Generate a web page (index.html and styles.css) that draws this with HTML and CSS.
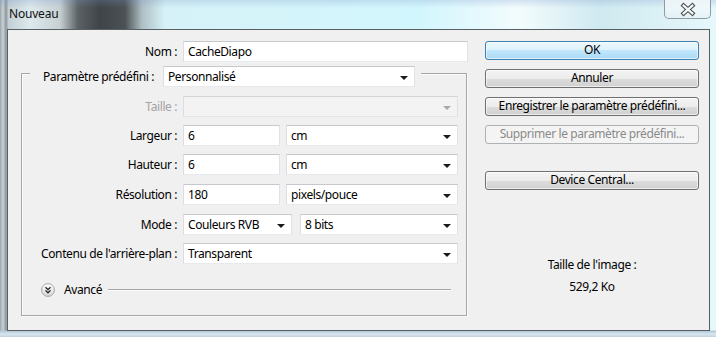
FILE: index.html
```html
<!DOCTYPE html>
<html lang="fr">
<head>
<meta charset="utf-8">
<title>Nouveau</title>
<link rel="stylesheet" href="styles.css">
</head>
<body>
<div class="window">
  <div class="titlebar">
    <span class="title">Nouveau</span>
    <div class="close">
      <svg width="47" height="19" viewBox="0 0 47 19">
        <path d="M20 5.5 L29 13.5 M29 5.5 L20 13.5" stroke="#4b4f52" stroke-width="4.4" stroke-linecap="square" fill="none"/>
        <path d="M20 5.5 L29 13.5 M29 5.5 L20 13.5" stroke="#f4f6f7" stroke-width="2.2" stroke-linecap="square" fill="none"/>
      </svg>
    </div>
  </div>
  <div class="client">
    <div class="form">
      <div class="row">
        <span class="lbl lbl-name">Nom :</span>
        <div class="field w-name">CacheDiapo</div>
      </div>
      <div class="group">
        <div class="legend">
          <span class="legend-lbl">Paramètre prédéfini :</span>
          <div class="field select w-preset">Personnalisé<span class="arrow"></span></div>
        </div>
        <div class="row mt9">
          <span class="lbl disabled">Taille :</span>
          <div class="field select off w-full"><span class="arrow"></span></div>
        </div>
        <div class="row mt8">
          <span class="lbl">Largeur :</span>
          <div class="field w-num">6</div>
          <div class="field select w-unit">cm<span class="arrow"></span></div>
        </div>
        <div class="row mt8">
          <span class="lbl">Hauteur :</span>
          <div class="field w-num">6</div>
          <div class="field select w-unit">cm<span class="arrow"></span></div>
        </div>
        <div class="row mt9">
          <span class="lbl">Résolution :</span>
          <div class="field w-num">180</div>
          <div class="field select w-unit">pixels/pouce<span class="arrow"></span></div>
        </div>
        <div class="row mt9">
          <span class="lbl">Mode :</span>
          <div class="field select w-mode">Couleurs RVB<span class="arrow"></span></div>
          <div class="field select w-bits">8 bits<span class="arrow"></span></div>
        </div>
        <div class="row mt8">
          <span class="lbl">Contenu de l'arrière-plan :</span>
          <div class="field select w-full">Transparent<span class="arrow"></span></div>
        </div>
        <div class="advanced">
          <svg class="adv-icon" width="14" height="14" viewBox="0 0 14 14">
            <defs>
              <linearGradient id="g" x1="0" y1="0" x2="0" y2="1">
                <stop offset="0" stop-color="#ffffff"/>
                <stop offset="1" stop-color="#d6d6d6"/>
              </linearGradient>
            </defs>
            <circle cx="7" cy="7" r="6.4" fill="url(#g)" stroke="#a3a3a3" stroke-width="1"/>
            <path d="M4.5 4.2 L7 6.6 L9.5 4.2 M4.5 7.4 L7 9.8 L9.5 7.4" stroke="#222" stroke-width="1.3" fill="none"/>
          </svg>
          <span class="adv-text">Avancé</span>
          <span class="adv-line"></span>
        </div>
      </div>
    </div>
    <div class="side">
      <div class="btn default">OK</div>
      <div class="btn">Annuler</div>
      <div class="btn">Enregistrer le paramètre prédéfini...</div>
      <div class="btn disabled-btn">Supprimer le paramètre prédéfini...</div>
      <div class="btn mt-device">Device Central...</div>
      <div class="info info-title">Taille de l'image :</div>
      <div class="info info-value">529,2 Ko</div>
    </div>
  </div>
</div>
</body>
</html>
```

FILE: styles.css
```css
* { box-sizing: border-box; }

html, body {
  margin: 0;
  padding: 0;
}

body {
  width: 716px;
  height: 337px;
  overflow: hidden;
  font-family: "Noto Sans", "DejaVu Sans", sans-serif;
  font-size: 12px;
  letter-spacing: -0.4px;
  color: #000;
  background:
    linear-gradient(to right, #9aa5ab 0, #c9d3d7 3px, #8d979c 6px, #b7c3c8 8px, transparent 8px),
    linear-gradient(to right, #b8c6cc 0, #dde9ec 30px, #c7d0d3 60px, #5b6165 78px, #3e4447 100px, #4b5154 125px, #aebfc4 142px, #d6f2f8 165px, #d2f6fd 420px, #f3fcfd 520px, #cfe9f0 600px, #e6f8fb 716px);
}

.window {
  width: 716px;
  height: 337px;
  display: flex;
  flex-direction: column;
  background: linear-gradient(to bottom, transparent 330px, #b3c7d8 331px, #d9e6ef 334px, #c2d2de 337px);
}

.titlebar {
  height: 29px;
  flex: none;
  display: flex;
  align-items: flex-start;
  padding-left: 9px;
  background: linear-gradient(to bottom, rgba(120, 150, 200, 0.25) 0, rgba(255, 255, 255, 0) 8px);
}

.title {
  margin-top: 6px;
  font-size: 12px;
  letter-spacing: -0.2px;
  line-height: 16px;
  color: #111;
}

.close {
  margin-left: auto;
  margin-right: 5px;
  width: 47px;
  height: 19px;
  border: 1px solid #8f9aa2;
  border-top: none;
  border-radius: 0 0 5px 5px;
  background: linear-gradient(to bottom, rgba(255, 255, 255, 0.7), rgba(230, 240, 244, 0.5));
  display: flex;
}

.close svg { display: block; margin-left: -1px; }

.client {
  flex: 1;
  margin: 0 6px 6px 7px;
  border: 1px solid #596065;
  background: #f0f0f0;
  display: flex;
}

.form {
  width: 462px;
  flex: none;
  padding-top: 11px;
  padding-left: 13px;
}

.row {
  display: flex;
  align-items: center;
  height: 21px;
}

.mt8 { margin-top: 8px; }
.mt9 { margin-top: 9px; }

.lbl {
  width: 161px;
  flex: none;
  padding-right: 6px;
  text-align: right;
  white-space: nowrap;
  line-height: 16px;
}

.lbl-name { width: 162px; }

.lbl.disabled { color: #a3a3a3; }

.field {
  height: 21px;
  flex: none;
  display: flex;
  align-items: center;
  padding-left: 4px;
  background: #fff;
  border: 1px solid;
  border-color: #c5c8cc #e0e2e6 #e6e9ee #dcdee3;
  white-space: nowrap;
  line-height: 16px;
}

.select { padding-right: 0; }

.select.off {
  background: #f3f3f3;
  border-color: #d2d4d6 #dfe0e2 #e3e4e6 #dcdddf;
}

.arrow {
  margin-left: auto;
  margin-right: 6px;
  margin-top: 2px;
  width: 0;
  height: 0;
  border-left: 4px solid transparent;
  border-right: 4px solid transparent;
  border-top: 4px solid #1a1a1a;
}

.off .arrow { border-top-color: #a9a9a9; }

.w-name { width: 285px; }
.w-preset { width: 252px; }
.w-full { width: 275px; }
.w-num { width: 97px; margin-right: 6px; }
.w-unit { width: 172px; }
.w-mode { width: 109px; margin-right: 8px; }
.w-bits { width: 158px; }

.group {
  margin-top: 11px;
  width: 446px;
  border: 1px solid #a5a7a9;
  box-shadow: inset 1px 1px 0 #fbfbfb, 1px 1px 0 #fbfbfb;
  padding-bottom: 18px;
}

.legend {
  margin-top: -8px;
  margin-left: 8px;
  width: 391px;
  height: 21px;
  display: flex;
  align-items: center;
  padding-left: 13px;
  background: #f0f0f0;
}

.legend-lbl {
  width: 120px;
  flex: none;
  white-space: nowrap;
  line-height: 16px;
}

.advanced {
  margin-top: 19px;
  height: 14px;
  display: flex;
  align-items: center;
  padding-left: 19px;
  padding-right: 15px;
}

.adv-icon { display: block; flex: none; }

.adv-text {
  margin-left: 9px;
  line-height: 16px;
}

.adv-line {
  flex: 1;
  margin-left: 6px;
  height: 2px;
  border-top: 1px solid #a5a7a9;
  border-bottom: 1px solid #fbfbfb;
}

.side {
  flex: 1;
  padding-top: 11px;
  padding-left: 15px;
  display: flex;
  flex-direction: column;
}

.btn {
  width: 214px;
  height: 19px;
  flex: none;
  margin-bottom: 9px;
  border: 1px solid #707070;
  border-radius: 3px;
  background: linear-gradient(to bottom, #f4f4f4 0, #ececec 50%, #dddddd 50%, #d0d0d0 100%);
  box-shadow: inset 0 0 0 1px rgba(255, 255, 255, 0.6);
  text-align: center;
  line-height: 16px;
  white-space: nowrap;
}

.btn.default {
  border-color: #3c7fb1;
  background: linear-gradient(to bottom, #ecf8fe 0, #dcf1fc 50%, #c1e7fc 50%, #a9daf5 100%);
}

.btn.disabled-btn {
  border-color: #adb2b5;
  background: #f4f4f4;
  color: #8a8a8a;
  box-shadow: none;
}

.btn.mt-device { margin-top: 18px; margin-bottom: 0; }

.info {
  width: 214px;
  text-align: center;
  line-height: 16px;
}

.info-title { margin-top: 67px; }
.info-value { margin-top: 6px; }
```
